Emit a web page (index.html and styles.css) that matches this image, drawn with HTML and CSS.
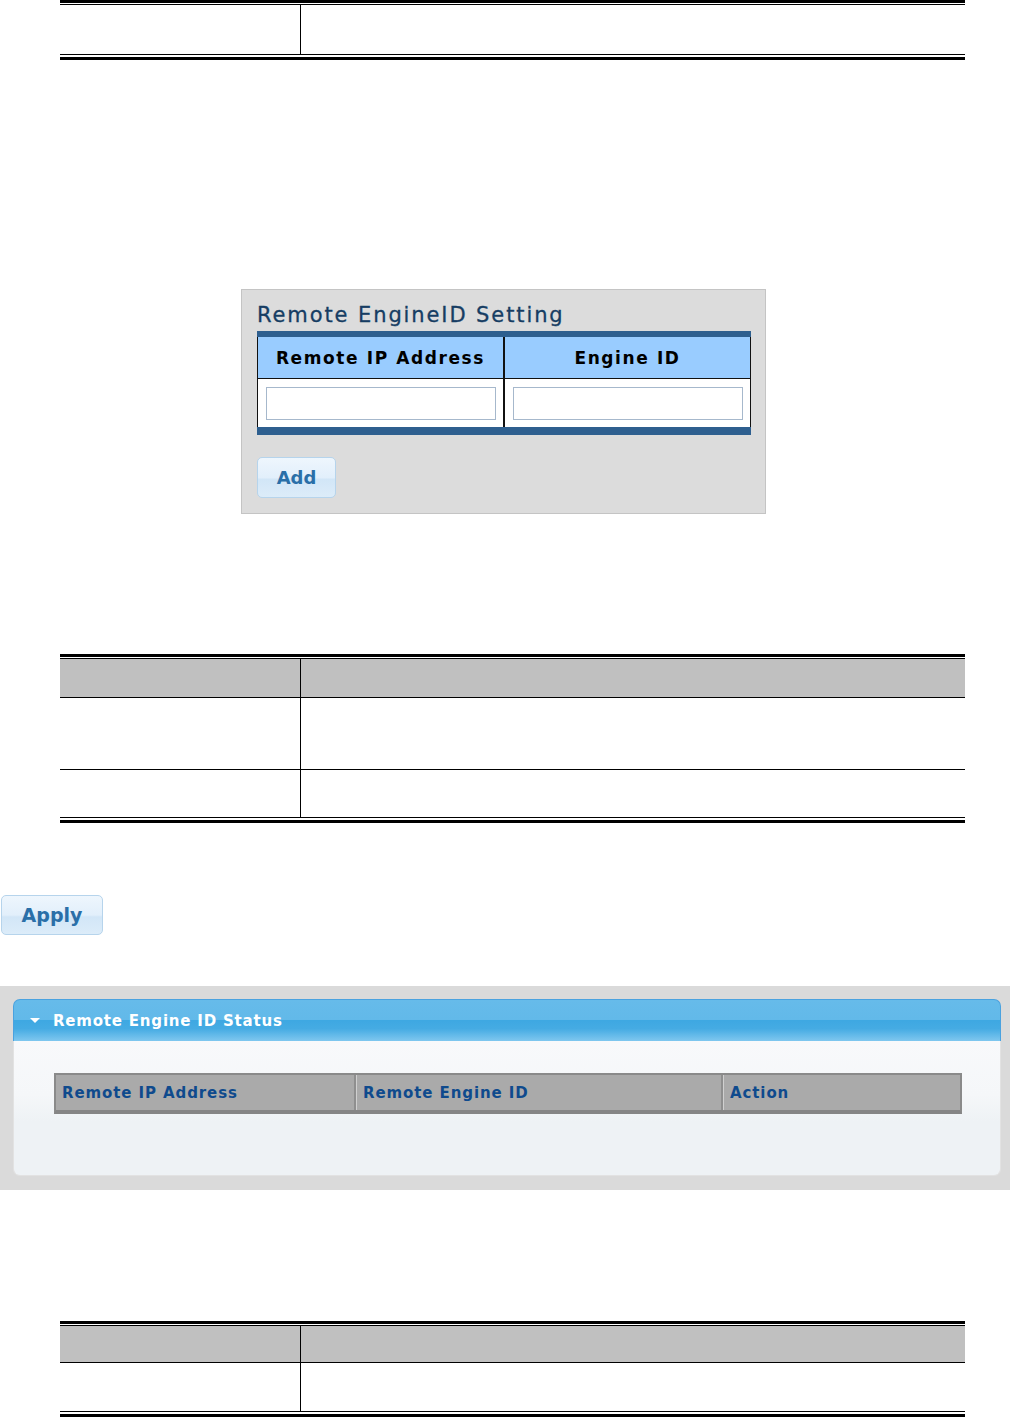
FILE: index.html
```html
<!DOCTYPE html>
<html>
<head>
<meta charset="utf-8">
<link rel="stylesheet" href="styles.css">
</head>
<body>
<div class="doc doc-first">
  <table>
    <tr class="r49"><td class="c1"></td><td></td></tr>
  </table>
</div>

<div class="setting">
  <div class="setting-title">Remote EngineID Setting</div>
  <table class="setting-table">
    <tr class="setting-head"><th class="sc1">Remote IP Address</th><th>Engine ID</th></tr>
    <tr class="setting-row"><td class="sc1"><input class="field" type="text"></td><td><input class="field" type="text"></td></tr>
  </table>
  <button class="btn btn-add">Add</button>
</div>

<div class="doc doc-second">
  <table>
    <tr class="gray r38"><td class="c1"></td><td></td></tr>
    <tr class="r71"><td class="c1"></td><td></td></tr>
    <tr class="r47"><td class="c1"></td><td></td></tr>
  </table>
</div>

<button class="btn btn-apply">Apply</button>

<div class="panel-wrap">
  <div class="panel">
    <div class="panel-head"><span class="tri"></span>Remote Engine ID Status</div>
    <div class="panel-body">
      <table class="status-table">
        <tr><th class="st1">Remote IP Address</th><th class="st2">Remote Engine ID</th><th>Action</th></tr>
      </table>
    </div>
  </div>
</div>

<div class="doc doc-third">
  <table>
    <tr class="gray r36"><td class="c1"></td><td></td></tr>
    <tr class="r48"><td class="c1"></td><td></td></tr>
  </table>
</div>
</body>
</html>
```

FILE: styles.css
```css
html, body {
  margin: 0;
  padding: 0;
  background: #fff;
  font-family: "DejaVu Sans", Verdana, sans-serif;
}

body {
  width: 1011px;
  height: 1418px;
  overflow: hidden;
}

/* documentation tables */
.doc {
  margin-left: 60px;
  width: 905px;
  border-top: 3px solid #000;
  border-bottom: 3px solid #000;
  padding: 1px 0 2px;
}
.doc table {
  width: 100%;
  border-collapse: collapse;
  border-top: 1px solid #000;
  border-bottom: 1px solid #000;
}
.doc td {
  padding: 0;
  border-top: 1px solid #000;
}
.doc tr:first-child td { border-top: none; }
.doc td.c1 {
  width: 240px;
  border-right: 1px solid #000;
}
.doc tr.gray td { background: #c0c0c0; }
.r49 td { height: 49px; }
.r38 td { height: 38px; }
.r71 td { height: 71px; }
.r47 td { height: 47px; }
.r36 td { height: 36px; }
.r48 td { height: 48px; }

.doc-first { margin-top: 0; }
.doc-second { margin-top: 140px; }
.doc-third { margin-top: 131px; }

/* Remote EngineID Setting box */
.setting {
  margin: 229px 0 0 241px;
  width: 508px;
  height: 223px;
  background: #dcdcdc;
  border: 1px solid #c4c4c4;
  padding: 0 0 0 15px;
}
.setting-title {
  padding-top: 10px;
  height: 31px;
  line-height: 30px;
  font-size: 21px;
  letter-spacing: 1.9px;
  color: #163d63;
  -webkit-text-stroke: 0.3px #163d63;
}
.setting-table {
  width: 494px;
  border-collapse: collapse;
  border-top: 6px solid #2e5f8f;
  border-bottom: 8px solid #2e5f8f;
  border-left: 1px solid #111;
  border-right: 1px solid #111;
}
.setting-head th {
  height: 41px;
  padding: 0;
  background: #99ccff;
  border-bottom: 1px solid #111;
  font-size: 17px;
  font-weight: bold;
  letter-spacing: 1.6px;
  color: #000;
  text-align: center;
}
.setting-table .sc1 {
  width: 245px;
  border-right: 2px solid #111;
}
.setting-row td {
  height: 48px;
  padding: 0;
  background: #fff;
  text-align: center;
}
.field {
  display: block;
  box-sizing: border-box;
  margin: 0 auto;
  width: 230px;
  height: 33px;
  border: 1px solid #a6b8cc;
  background: #fff;
  padding: 0;
}

/* buttons */
.btn {
  display: block;
  box-sizing: border-box;
  border: 1px solid #b6d4ec;
  border-radius: 5px;
  background: linear-gradient(#eef6fd 0%, #e2effb 50%, #d2e6f7 55%, #dcecf9 100%);
  color: #2a6fa8;
  font-family: "DejaVu Sans", Verdana, sans-serif;
  font-weight: bold;
  padding: 0;
  cursor: pointer;
}
.btn-add {
  margin-top: 22px;
  width: 79px;
  height: 41px;
  font-size: 18px;
}
.btn-apply {
  margin: 72px 0 0 1px;
  width: 102px;
  height: 40px;
  font-size: 19px;
}

/* status panel */
.panel-wrap {
  margin-top: 51px;
  width: 1010px;
  height: 204px;
  box-sizing: border-box;
  background: #dadada;
  padding: 13px 9px 0 13px;
}
.panel {
  width: 988px;
}
.panel-head {
  box-sizing: border-box;
  height: 42px;
  border: 1px solid #4aa2df;
  border-bottom: none;
  border-radius: 7px 7px 0 0;
  background: linear-gradient(#66bbea 0%, #62b9e9 48%, #3ea8e2 50%, #45abe3 70%, #7fc7ef 100%);
  color: #fff;
  font-size: 15px;
  font-weight: bold;
  letter-spacing: 0.8px;
  line-height: 43px;
  padding-left: 16px;
}
.tri {
  display: inline-block;
  width: 0;
  height: 0;
  border-left: 5px solid transparent;
  border-right: 5px solid transparent;
  border-top: 5px solid #fff;
  vertical-align: middle;
  margin: -3px 13px 0 0;
}
.panel-body {
  box-sizing: border-box;
  height: 135px;
  border: 1px solid #e2e2e2;
  border-top: none;
  border-radius: 0 0 7px 7px;
  background: linear-gradient(#f8f9fb 0%, #f5f7f9 40%, #eef2f5 60%, #eef2f5 100%);
  padding: 32px 0 0 40px;
}
.status-table {
  width: 908px;
  border-collapse: separate;
  border-spacing: 0;
  border: 2px solid #8a8a8a;
  border-bottom: 4px solid #858585;
  background: #aaaaaa;
}
.status-table th {
  height: 34px;
  padding: 1px 0 0 6px;
  text-align: left;
  font-size: 15px;
  font-weight: bold;
  letter-spacing: 0.9px;
  color: #0f4a8d;
  border-left: 1px solid #d0d0d0;
  border-right: 2px solid #8f8f8f;
}
.status-table th:first-child { border-left: none; }
.status-table th:last-child { border-right: none; }
.status-table .st1 { width: 292px; }
.status-table .st2 { width: 358px; }
```
